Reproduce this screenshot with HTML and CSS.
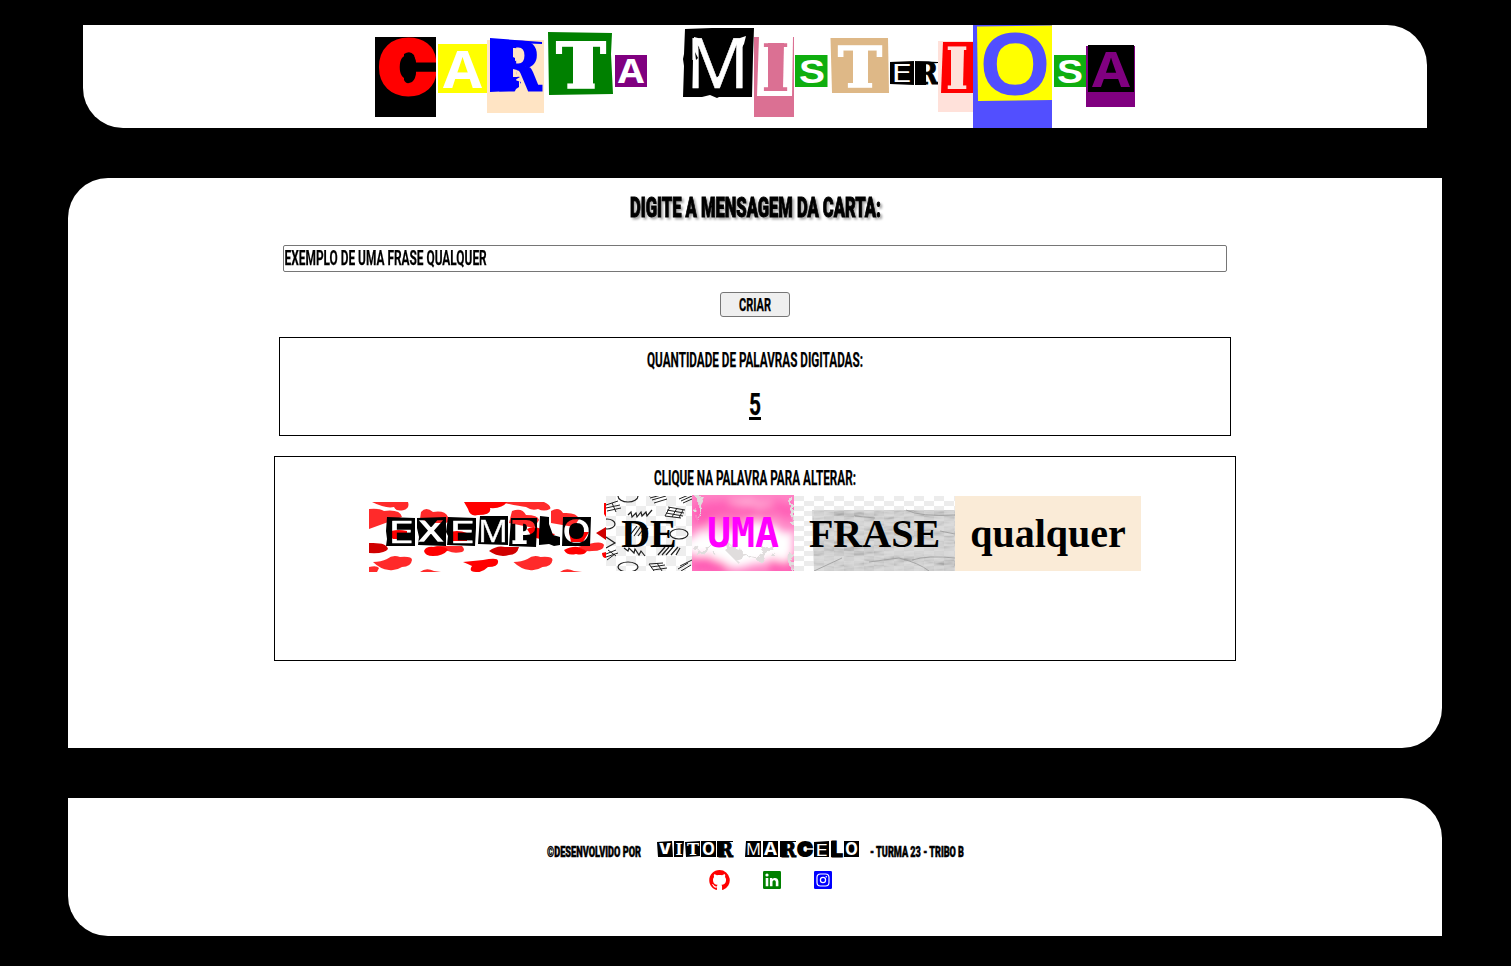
FILE: index.html
```html
<!DOCTYPE html>
<html lang="pt-br">
<head>
<meta charset="utf-8">
<title>Carta Misteriosa</title>
<link rel="stylesheet" href="styles.css">
</head>
<body>
<header class="header">
<svg class="logo" width="760" height="103" viewBox="375 25 760 103">
  <rect x="375" y="37" width="61" height="80"/>
  <text class="heavy" x="379" y="93" font-size="72" textLength="57" lengthAdjust="spacingAndGlyphs" fill="red" stroke="red" stroke-width="5">C</text>
  <path d="M404 54q6-4 10 1l2 8h20v8h-20q0 8-4 11-6 3-8-2z"/>
  <rect x="436" y="37" width="3" height="80" fill="#fff"/>
  <path fill="#ff0" d="M438 44h49v49h-49z"/>
  <text class="open" x="443" y="87.500" font-size="52" textLength="39" lengthAdjust="spacingAndGlyphs" fill="#fff">A</text>
  <path fill="bisque" d="M487 40h57v73h-57z"/>
  <path fill="#00f" d="M490 38l52 4v2l-27-1v33l5 1-5 3 6 2v3l-5 2-1 3-6 1-19 1z"/>
  <text class="slab" x="498" y="90" font-size="65" textLength="43" lengthAdjust="spacingAndGlyphs" fill="#00f" stroke="#00f" stroke-width="3">R</text>
  <path fill="bisque" d="M515 48q5 0 6 6 0 6-6 7v-3l-2-1v-9zM513 69l4 1-1 4 3 2-2 1h-4zM519 80l4 8v5h-9l2-4 3-2z"/>
  <path fill="green" d="M548 32l64 1-1 21 2 40-64 1z"/>
  <text class="slab" x="556" y="87.500" font-size="63" textLength="50" lengthAdjust="spacingAndGlyphs" fill="#fff" stroke="#fff" stroke-width="1.500">T</text>
  <path fill="#fff" d="M573 45h20v40h-20z"/>
  <path fill="purple" d="M615 55h32v32h-32z"/>
  <text class="open" x="618" y="83" font-size="33.500" textLength="26" lengthAdjust="spacingAndGlyphs" fill="#fff">A</text>
  <path d="M685 29l27-1h42l-1 28-1 41h-33l-2 1-7-3-8 2h-19l1-31-1-7 1-5z"/>
  <text class="thin" x="686" y="88" font-size="70" textLength="63" lengthAdjust="spacingAndGlyphs" fill="#fff" stroke="#fff" stroke-width=".5">M</text>
  <path fill="#fff" d="M694 37l4 1 7 11-2 1-9-8zM740 38l6-2-2 8-3 5zM714 79l5-3 1 4-3 5z"/>
  <path d="M685 60h8l-1 28h-7zM695 52l3 6-2 2zM744 60l4-8v36h-5z"/>
  <path fill="#db7093" d="M754 37h40v80h-40z"/>
  <path fill="#fff" d="M759 37h34l-1 59h-35z"/>
  <text class="slab" x="761" y="90.500" font-size="66" textLength="29" lengthAdjust="spacingAndGlyphs" fill="#db7093">I</text>
  <path fill="#db7093" d="M768 43h16l-1 46h-15z"/>
  <path fill="#0fae0f" d="M795 55h32.500v32H795z"/>
  <text class="sans" x="799" y="83" font-size="34" textLength="26" lengthAdjust="spacingAndGlyphs" fill="#fff">S</text>
  <path fill="#deb887" d="M830.500 38H888l1 55h-57z"/>
  <text class="slab" x="838" y="86.500" font-size="56" textLength="44" lengthAdjust="spacingAndGlyphs" fill="#fff" stroke="#fff" stroke-width="1.500">T</text>
  <path fill="#fff" d="M853 48h15v36h-15z"/>
  <path d="M890 62l24-1v24l-24-1z"/>
  <text class="thin" x="891" y="82" font-size="26" textLength="21" lengthAdjust="spacingAndGlyphs" fill="#fff">E</text>
  <path d="M915 61l23 1v1l-12 1v21h-11z"/>
  <text class="slab" x="917" y="84" font-size="29" textLength="21" lengthAdjust="spacingAndGlyphs" stroke="#000">R</text>
  <path fill="#ffe1da" d="M938 41h35v71h-35z"/>
  <path fill="red" d="M943 42h30v51h-32z"/>
  <text class="slab" x="945.500" y="88.500" font-size="57" textLength="23" lengthAdjust="spacingAndGlyphs" fill="#ffe1da">I</text>
  <path fill="#ffe1da" d="M951 48h13l-1 39h-12z"/>
  <path fill="#524fff" d="M973 25h79v103h-79z"/>
  <path fill="#ff0" d="M977 26.500l75-1v74.500l-74 1z"/>
  <text class="thin" x="981" y="92" font-size="78" textLength="68" lengthAdjust="spacingAndGlyphs" fill="#524fff" stroke="#524fff" stroke-width="5">O</text>
  <path fill="#0fae0f" d="M1054 55h32v32h-32z"/>
  <text class="sans" x="1057" y="83" font-size="34" textLength="26" lengthAdjust="spacingAndGlyphs" fill="#fff">S</text>
  <path fill="purple" d="M1086 46h49v61h-49z"/>
  <path d="M1088 45h46v47h-46z"/>
  <text class="open" x="1092" y="86.500" font-size="49" textLength="38" lengthAdjust="spacingAndGlyphs" fill="purple">A</text>
</svg>
</header>

<main class="main">
  <svg class="line heading" width="251" height="30"><text x="0" y="24" font-size="28" textLength="251" lengthAdjust="spacingAndGlyphs">DIGITE A MENSAGEM DA CARTA:</text></svg>
  <div class="field"><input class="field-input" type="text" value="EXEMPLO DE UMA FRASE QUALQUER"></div>
  <button class="button"><svg class="line" width="32" height="21"><text x="0" y="16.500" font-size="18.500" textLength="32" lengthAdjust="spacingAndGlyphs">CRIAR</text></svg></button>
  <section class="box counter">
    <svg class="line" width="217" height="24"><text x="0" y="20.500" font-size="20" textLength="216" lengthAdjust="spacingAndGlyphs">QUANTIDADE DE PALAVRAS DIGITADAS:</text></svg>
    <svg class="line total" width="12" height="36"><text x="0" y="27" font-size="31" textLength="12" lengthAdjust="spacingAndGlyphs">5</text><path d="M0 29h12v3H0z"/></svg>
  </section>
  <section class="box letter">
    <svg class="line" width="203" height="24"><text x="0" y="20.500" font-size="20" textLength="202" lengthAdjust="spacingAndGlyphs">CLIQUE NA PALAVRA PARA ALTERAR:</text></svg>
    <div class="words">
      <svg class="word-hearts" width="237" height="70" viewBox="369 502 237 70">
        <defs>
          <path id="heart" d="M4 60q8 0 14-3 6-5 13-2 12-1 12 3-1 7-10 7-6 4-13 3-9-1-16-8z"/>
          <mask id="cut" maskUnits="userSpaceOnUse" x="369" y="502" width="237" height="70">
            <path fill="#fff" d="M369 502h237v70H369z"/>
            <g class="thin" font-size="31" stroke="#000" stroke-width=".5">
              <text x="388" y="543" textLength="26" lengthAdjust="spacingAndGlyphs">E</text>
              <text x="420" y="541" font-size="28" textLength="22" lengthAdjust="spacingAndGlyphs" stroke-width="1.500">X</text>
              <text x="449" y="543" textLength="26" lengthAdjust="spacingAndGlyphs">E</text>
              <text x="478" y="541.500" textLength="30" lengthAdjust="spacingAndGlyphs">M</text>
              <text class="slab" x="512" y="543" font-size="30" textLength="23" lengthAdjust="spacingAndGlyphs" stroke-width="2">P</text>
              <text x="563" y="542" textLength="27" lengthAdjust="spacingAndGlyphs" stroke-width="1.500">O</text>
            </g>
          </mask>
        </defs>
        <path fill="#fff" d="M369 502h237v70H369z"/>
        <g transform="translate(369 502)">
          <g fill="#ff2a2a">
            <path d="M3 0h36q2 6-4 8-8 2-10-3-8 2-22-5zM0 7q10-1 15 2 16-2 18 6L0 27zM52 10q5-6 12 0 12-2 15 5 2 4-2 6H63l-12-4zM131 0h44q8 4 6 7-6 3-12 0-6 2-12-2-8-1-26-5zM143 9q10-4 14 4 12 0 13 5l-5 8-25-5zM182 9q8-5 12 2 14-1 16 6l-5 8-23-4z"/>
            <path d="M60 46l8-2h25q4 4 0 6-8 2-14-1zM209 45q24-8 26-2 0 6-12 6-8 1-14-4zM51 70q6-5 14-1l7 1zM0 65q8-2 10 1l-2 4H0zM191 70q6-5 14-1l8 1z"/>
            <use href="#heart"/><use href="#heart" x="140.500"/>
          </g>
          <path fill="red" d="M95 0l4 7q2 8 10 6 14 0 12-7 12 1 17-6zM55 49q2-5 10-4 12-1 14 3-5 6-15 6-8 0-9-5zM195 48q8-4 14-3l9 4q-3 5-11 3-9 2-12-4zM94 60l20-2q15-3 15 1 1 6-10 6-6 6-12 5-8 0-4-6-4-2-9-4zM18 31q8-5 20-2v8H24zM78 31q10-4 20 0v8H83zM158 27q8-5 22 4l6 1-7 7-16-4zM235 1h2v14l-2-3zM200 30h20l-6 10h-12zM233 51l4-1v6q-4 0-4-5z"/>
          <path fill="#d00000" d="M0 41q18-1 19 6-3 5-19 4zM227 31l10-6v13zM120 49q8-6 16-4h14q-2 8-10 8-10 3-20-4z"/>
        </g>
        <path mask="url(#cut)" d="M387 517l28 1v28h-29l1-7-1-8zM417 518l29-1v29l-28-1 1-8-2-9zM448 517l28 1v10l-1 18-28-1 1-9-2-4zM480 516h28v29l-30-1zM511 518h26v9l-1 20-27-1zM563 517h28l-1 29h-28z"/>
        <path d="M540 516l9 1v7l4 11 7 2v8l-6 1-5-2-10 1v-10z"/>
        <text class="heavy" x="540" y="544" font-size="34" textLength="19" lengthAdjust="spacingAndGlyphs">L</text>
      </svg>
      <span class="word doodle">
        <svg class="texture" viewBox="0 0 86 75">
          <defs><pattern id="checks" width="20" height="20" patternUnits="userSpaceOnUse"><path fill="#eee" d="M0 0h10v10H0zM10 10h10v10H10z"/></pattern></defs>
          <path fill="#fff" d="M0 0h86v75H0z"/><path fill="url(#checks)" d="M0 0h86v75H0z"/>
          <g fill="none" stroke="#222" stroke-width="1.200">
            <ellipse cx="22" cy="0" rx="10" ry="6"/><ellipse cx="73" cy="38" rx="9" ry="5"/><ellipse cx="1" cy="28" rx="8" ry="5"/><ellipse cx="22" cy="71" rx="10" ry="5"/>
            <path d="M22 19l3-3 1 5 4-4 1 4 4-5 1 4 4-4 1 4 5-6M18 52l4 3 1-3 5 5 1-4 4 6 2-4 4 5M0 41l9 6-9 5"/>
            <path stroke-width="1" d="M43 0l15-4m-14 6l15-4m-13 6l14-4m-12 7l13-4M62 11l17 3M61 14l17 3M60 17l17 3M59 20l16 2M64 11l-5 9M71 12l-5 9M77 14l-4 8M73 3l12-5M75 5l11-5M77 7l9-4M0 9l12-4M0 12l14-3M1 15l14-3M6 7l4 9M0 58l10-4M0 61l12-4M1 64l8-6M2 54l8 6M43 68l14-1M45 71l14-2M47 74l14-2M43 68l5 7M51 67l5 8M72 73l10-6M75 75l10-6M74 70l12-6"/>
            <path d="M24 39l7-9m-3 10l7-10m-3 10l7-9m-3 9l6-8M52 59l7-8m-3 8l7-8m-3 8l7-8m-2 8l7-8m-2 8l4-7"/>
          </g>
        </svg><b>DE</b></span>
      <span class="word cloud">
        <svg class="texture" viewBox="0 0 102 76" preserveAspectRatio="none">
          <defs>
            <filter id="soft" x="-30%" y="-30%" width="160%" height="160%"><feTurbulence type="fractalNoise" baseFrequency=".045" numOctaves="3" seed="4"/><feDisplacementMap in="SourceGraphic" scale="18"/><feGaussianBlur stdDeviation="4"/></filter>
            <filter id="rough"><feTurbulence type="fractalNoise" baseFrequency=".1" numOctaves="3" seed="7"/><feDisplacementMap in="SourceGraphic" scale="16"/></filter>
          </defs>
          <path fill="#ff83c5" d="M0 0h102v76H0z"/>
          <g filter="url(#soft)"><path fill="#ff5db5" d="M10 5h90v14H60L25 24 0 30V5zM0 62h32v18H0zM84 62h25v20H79z"/><path fill="#fff" d="M-5 45l25-14 25 5 20-8 40 10v24l-30 8H40L15 60H-8z"/><path fill="#ffc3e2" d="M40 7h42v5H40zM5 33h22v6H5z"/></g>
          <g filter="url(#rough)" fill="#e0dddd"><path d="M5 3h8l-5 9-2 16zM33 48l14 4 5 9 13 1 10-9 12 1-18 12-12-3-12 4-10-10zM97 3h4v25h-3zM98 58h4v16h-5zM4 55l16-4v4L5 61z"/></g>
        </svg><b>UMA</b></span>
      <span class="word paper">
        <svg class="texture" viewBox="0 0 161 75">
          <defs>
            <pattern id="grid" width="20" height="10" y="5" patternUnits="userSpaceOnUse"><path fill="#ececec" d="M10 0h10v5H10zM0 5h10v5H0z"/></pattern>
            <filter id="creases" x="0" y="0" width="100%" height="100%"><feTurbulence type="fractalNoise" baseFrequency=".018 .055" numOctaves="4" seed="9"/><feDiffuseLighting lighting-color="#d2d2d2" surfaceScale="5"><feDistantLight azimuth="70" elevation="68"/></feDiffuseLighting><feComposite in2="SourceGraphic" operator="in"/></filter>
          </defs>
          <path fill="#fff" d="M0 0h161v75H0z"/><path fill="url(#grid)" d="M0 0h161v75H0z"/>
          <path filter="url(#creases)" opacity=".9" d="M18 14h143v61H20z"/>
          <path fill="url(#grid)" opacity=".3" d="M18 14h143v61H18z"/>
          <g fill="none" stroke="#999" stroke-width=".8"><path d="M112 14q14 7 49 5M75 66l30-4q20 5 30 13M118 64q16-5 43-2M20 75l28-13M146 35l15 3M61 20l20 2"/></g>
        </svg><b>FRASE</b></span>
      <span class="word plain"><b>qualquer</b></span>
    </div>
  </section>
</main>

<footer class="footer">
  <div class="credits">
    <svg class="line strong" width="94" height="22"><text x="0" y="19" font-size="14" textLength="94" lengthAdjust="spacingAndGlyphs">©DESENVOLVIDO POR</text></svg>
    <svg class="author" width="203" height="22" viewBox="657 838 203 22">
      <path d="M657 842l15-1 1 16h-15zM674 841h10l-1 16h-9zM685 842l15-1v15l-14 1zM701 841h15v16h-15zM717 841h6v16h-6zM717 841h16v1h-16zM746 841h15v16h-16zM763 841h15v16h-15zM780 841h6v16h-6zM780 841h16v1h-16zM814 842l15-1v16h-15zM831 841h5v16h-5zM844 841h15v16h-15z"/>
      <g font-size="17" fill="#fff" class="thin">
        <text class="heavy" x="659" y="854" font-size="14" textLength="12" lengthAdjust="spacingAndGlyphs">V</text>
        <text class="slab" x="675.500" y="855" textLength="7" lengthAdjust="spacingAndGlyphs">I</text>
        <text class="slab" x="687" y="854.500" font-size="16" textLength="12" lengthAdjust="spacingAndGlyphs">T</text>
        <text class="open" x="702" y="855" textLength="13" lengthAdjust="spacingAndGlyphs">O</text>
        <text x="746" y="855" textLength="15" lengthAdjust="spacingAndGlyphs">M</text>
        <text class="open" x="764" y="855" textLength="13" lengthAdjust="spacingAndGlyphs">A</text>
        <text x="815" y="855.500" textLength="13" lengthAdjust="spacingAndGlyphs">E</text>
        <text class="open" x="845" y="855" textLength="13" lengthAdjust="spacingAndGlyphs">O</text>
      </g>
      <g font-size="21" class="slab" stroke="#000">
        <text x="718" y="856.500" textLength="15" lengthAdjust="spacingAndGlyphs">R</text>
        <text x="781" y="856.500" textLength="15" lengthAdjust="spacingAndGlyphs">R</text>
        <text class="heavy" x="797.500" y="856" font-size="19" textLength="15" lengthAdjust="spacingAndGlyphs" stroke-width="2">C</text>
        <text class="heavy" x="831" y="857" textLength="12" lengthAdjust="spacingAndGlyphs">L</text>
      </g>
    </svg>
    <svg class="line strong turma" width="94" height="22"><text x="0" y="19" font-size="14" textLength="94" lengthAdjust="spacingAndGlyphs">- TURMA 23 - TRIBO B</text></svg>
  </div>
  <nav class="social">
    <svg width="21" height="20.500" viewBox="0 0 16 16" fill="red"><path d="M8 0C3.580 0 0 3.580 0 8c0 3.540 2.290 6.530 5.470 7.590.4.070.55-.17.55-.38 0-.19-.01-.82-.01-1.490-2.010.37-2.530-.49-2.690-.94-.09-.23-.48-.94-.82-1.130-.28-.15-.68-.52-.01-.53.63-.01 1.080.58 1.230.82.72 1.210 1.870.87 2.330.66.07-.52.28-.87.51-1.070-1.780-.2-3.640-.89-3.640-3.950 0-.87.31-1.590.82-2.150-.08-.2-.36-1.020.08-2.120 0 0 .67-.21 2.200.82.64-.18 1.320-.27 2-.27s1.360.09 2 .27c1.530-1.040 2.200-.82 2.200-.82.44 1.100.16 1.920.08 2.120.51.56.82 1.270.82 2.150 0 3.070-1.870 3.750-3.650 3.950.29.25.54.73.54 1.480 0 1.070-.01 1.930-.01 2.200 0 .21.15.46.55.38A8 8 0 0 0 8 0z"/></svg>
    <svg width="18" height="18" viewBox="0 0 18 18"><rect width="18" height="18" rx="1.200" fill="green"/><circle cx="4" cy="4" r="1.600" fill="#fff"/><path fill="#fff" d="M2.700 7h2.600v8.300H2.700zM6.900 7h2.500v1.200c1-1.900 6-2.200 6 2.300v4.800h-2.600v-4.200c0-2.500-3.300-2.300-3.300 0v4.200H6.900z"/></svg>
    <svg width="18" height="18" viewBox="0 0 18 18"><rect width="18" height="18" rx="1.200" fill="#00f"/><g fill="none" stroke="#fff" stroke-width="1.200"><rect x="3" y="3" width="12" height="12" rx="3.500"/><circle cx="9" cy="9" r="2.600"/></g><circle cx="12.300" cy="5.700" r=".8" fill="#fff"/></svg>
  </nav>
</footer>
</body>
</html>
```
FILE: styles.css
```css
body { margin: 0; background: #000; color: #000; font-family: Roboto, "Liberation Sans", sans-serif; }
svg { display: block; flex: none; }
.header, .main, .footer { box-sizing: border-box; background: #fff; display: flex; flex-direction: column; align-items: center; }
.header { margin: 25px 84px 0 83px; height: 103px; border-radius: 0 40px 0 40px; }
.main { margin: 50px 69px 0 68px; height: 570px; padding-top: 15px; border-radius: 40px 0 40px 0; }
.footer { margin: 50px 69px 0 68px; height: 138px; padding-top: 40px; border-radius: 0 40px 0 40px; }
.heavy { font-family: Inter, Roboto, sans-serif; font-weight: 900; }
.sans { font-family: "Liberation Sans", sans-serif; font-weight: 700; }
.open { font-family: "Open Sans", sans-serif; font-weight: 700; }
.slab { font-family: "DejaVu Serif", serif; font-weight: 700; }
.thin { font-family: "Open Sans", sans-serif; font-weight: 500; }
.line { overflow: visible; font-family: Roboto, sans-serif; font-weight: 700; }
.line text { stroke: #000; stroke-width: .25px; }
.heading { font-weight: 900; filter: drop-shadow(2px 2px 1px rgba(0, 0, 0, .35)); }
.heading text { stroke-width: 1px; }
.strong { font-weight: 900; }
.strong text { stroke-width: .5px; }
.field { box-sizing: border-box; width: 944px; height: 27px; margin-top: 22px; border: 1px solid #767676; border-radius: 2px; overflow: hidden; }
.field-input { display: block; width: 1580px; height: 25px; border: 0; outline: 0; padding: 0 0 2px 1px; box-sizing: border-box; background: transparent; color: #000; font: 700 20px Roboto, sans-serif; -webkit-text-stroke: .25px #000; transform: scaleX(.594); transform-origin: left; }
.button { box-sizing: border-box; width: 70px; height: 25px; margin: 20px 0 0; padding: 0; border: 1px solid #767676; border-radius: 3px; background: #efefef; display: flex; justify-content: center; align-items: center; }
.box { box-sizing: border-box; border: 1px solid #000; margin-top: 20px; display: flex; flex-direction: column; align-items: center; }
.counter { width: 952px; height: 99px; padding-top: 8px; }
.total { margin-top: 18px; }
.letter { width: 962px; height: 205px; padding-top: 7px; }
.words { display: flex; align-items: flex-start; margin-top: 7px; }
.word-hearts { margin-top: 7px; }
.word { position: relative; box-sizing: border-box; height: 75px; margin-top: 1px; padding: 15px 0; text-align: center; font: 700 40px/45px "Liberation Serif", serif; }
.word b { position: relative; }
.texture { position: absolute; inset: 0; width: 100%; height: 100%; }
.doodle { width: 86px; }
.cloud { width: 102px; height: 76px; margin-top: 0; padding-top: 16px; color: #f0f; font-family: "DejaVu Sans Mono", monospace; }
.paper { width: 161px; }
.plain { width: 186px; background: antiquewhite; }
.credits { display: flex; }
.author { margin-left: 16px; }
.turma { margin-left: 10px; }
.social { display: flex; align-items: center; margin: 10px 0 0 30px; gap: 33px; }
```
